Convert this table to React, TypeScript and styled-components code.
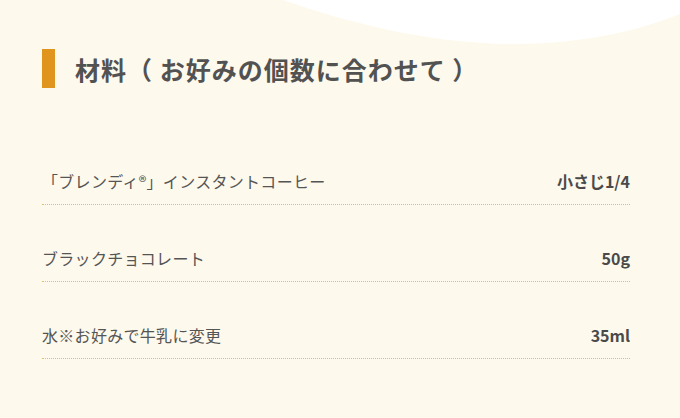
import React from "react";
import styled, { createGlobalStyle } from "styled-components";

const Global = createGlobalStyle`
  html, body { margin: 0; padding: 0; background: #fdf9ec; }
  body { font-family: "Noto Sans CJK JP", "Noto Sans", sans-serif; color: #555; }
`;

const Page = styled.div`
  position: relative;
  width: 680px;
  height: 418px;
  overflow: hidden;
  background: #fdf9ec;
`;

const Wave = styled.svg`
  position: absolute;
  top: 0;
  left: 0;
  pointer-events: none;
`;

const Content = styled.div`
  position: relative;
  padding: 49px 50px 0 42px;
  display: flex;
  flex-direction: column;
`;

const Heading = styled.h2`
  margin: 0;
  display: flex;
  align-items: center;
  gap: 20px;
  height: 39px;
  font-size: 25px;
  font-weight: 700;
  color: #525252;
  letter-spacing: 1px;
`;

const Bar = styled.span`
  width: 13px;
  height: 39px;
  background: #e0951e;
  flex: none;
`;

const List = styled.ul`
  list-style: none;
  margin: 81px 0 0;
  padding: 0;
`;

const Row = styled.li<{ $first?: boolean }>`
  display: flex;
  justify-content: space-between;
  align-items: center;
  padding: ${(p) => (p.$first ? "0" : "41px")} 0 11px;
  border-bottom: 1px dotted #e0bf66;
  font-size: 16px;
  line-height: 24px;
`;

const Name = styled.span`
  color: #555;
  letter-spacing: 0.3px;
`;

const Amount = styled.span`
  font-weight: 700;
  color: #4a4a4a;
`;

const items = [
  { name: "「ブレンディ®」インスタントコーヒー", amount: "小さじ1/4" },
  { name: "ブラックチョコレート", amount: "50g" },
  { name: "水※お好みで牛乳に変更", amount: "35ml" },
];

export default function App() {
  return (
    <Page>
      <Global />
      <Wave width="680" height="60" viewBox="0 0 680 60">
        <path
          d="M283,0 C345,22 430,44 513,44 C590,44 645,28 680,14 L680,0 Z"
          fill="#ffffff"
        />
      </Wave>
      <Content>
        <Heading>
          <Bar />
          材料（ お好みの個数に合わせて ）
        </Heading>
        <List>
          {items.map((it, i) => (
            <Row key={it.name} $first={i === 0}>
              <Name>{it.name}</Name>
              <Amount>{it.amount}</Amount>
            </Row>
          ))}
        </List>
      </Content>
    </Page>
  );
}
